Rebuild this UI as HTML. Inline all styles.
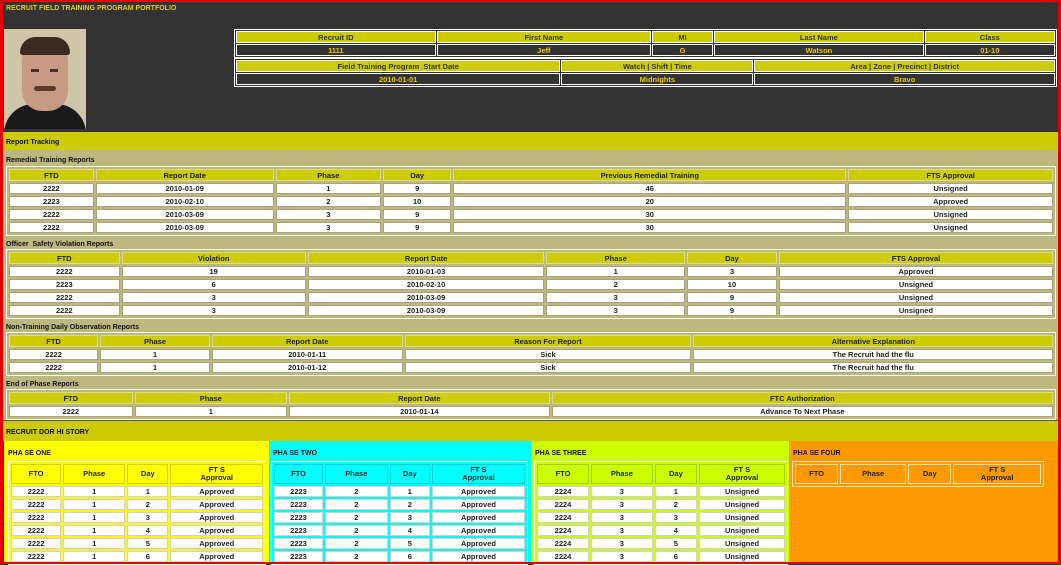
<!DOCTYPE html>
<html><head><meta charset="utf-8"><style>
*{margin:0;padding:0;box-sizing:border-box}
body{width:1061px;height:564px;overflow:hidden;background:#333;font-family:"Liberation Sans",Arial,sans-serif;font-size:7.5px;font-weight:bold;position:relative}
.frame{position:absolute;inset:0;border:3px solid #e00000;border-bottom-width:2px;border-top-width:2px;pointer-events:none;z-index:10}
.abs{position:absolute}
table{border-collapse:separate;border-spacing:2px;table-layout:fixed;position:absolute}
td{text-align:center;white-space:nowrap;overflow:hidden;padding:0}
.info{border:1px solid #fff;border-spacing:1px;background:#333}
.info td{border:1px solid #fff}
.info .h{background:#cccc00;color:#333;height:12px}
.info .v{background:#333;color:#e8c800;height:12px}
.rt{border:1px solid #fff;background:#bdb87f}
.rt td{border:1px solid #a9a47a;color:#222}
.rt .h td{background:#cccc00;border-color:#e0dc80;height:12px}
.rt .d td{background:#fff;height:11px}
.lbl{position:absolute;left:6px;color:#111;font-size:7px}
.ph{position:absolute;top:441px;height:123px}
.ph .t{position:absolute;left:4px;top:9px;color:#111;font-size:7px}
.pt{border:1px solid #fff;border-spacing:2px}
.pt td{border:1px solid rgba(0,0,0,.18);color:#222}
.pt .h td{height:20px;line-height:8px}
.pt .d td{background:#fff;height:11px}
</style></head><body>
<div class="frame"></div>
<div class="abs" style="left:6px;top:5px;color:#e8c800;font-size:7px">RECRUIT FIELD TRAINING PROGRAM PORTFOLIO</div>
<div class="abs" style="left:4px;top:29px;width:82px;height:100px;background:#cfc5a8;overflow:hidden">
 <div class="abs" style="left:0;top:75px;width:82px;height:30px;background:#1a1a1a;border-radius:30px 30px 0 0"></div>
 <div class="abs" style="left:18px;top:10px;width:46px;height:72px;background:#c79a82;border-radius:22px 22px 20px 20px"></div>
 <div class="abs" style="left:16px;top:8px;width:50px;height:18px;background:#3a2a22;border-radius:25px 25px 4px 4px"></div>
 <div class="abs" style="left:27px;top:40px;width:8px;height:3px;background:#4a3028"></div>
 <div class="abs" style="left:46px;top:40px;width:8px;height:3px;background:#4a3028"></div>
 <div class="abs" style="left:30px;top:57px;width:22px;height:5px;background:#5a3a2a;border-radius:3px"></div>
</div>

<table class="info" style="left:234px;top:29px;width:823px">
<colgroup><col style="width:24.5%"><col style="width:26.3%"><col style="width:7.5%"><col style="width:25.7%"><col style="width:16%"></colgroup>
<tr><td class="h">Recruit ID</td><td class="h">First Name</td><td class="h">MI</td><td class="h">Last Name</td><td class="h">Class</td></tr>
<tr><td class="v">1111</td><td class="v">Jeff</td><td class="v">G</td><td class="v">Watson</td><td class="v">01-10</td></tr>
</table>
<table class="info" style="left:234px;top:58px;width:823px">
<colgroup><col style="width:39.7%"><col style="width:23.5%"><col style="width:36.8%"></colgroup>
<tr><td class="h">Field Training Program&nbsp; Start Date</td><td class="h">Watch | Shift | Time</td><td class="h">Area | Zone | Precinct | District</td></tr>
<tr><td class="v">2010-01-01</td><td class="v">Midnights</td><td class="v">Bravo</td></tr>
</table>

<div class="abs" style="left:0;top:132px;width:1061px;height:18px;background:#cccc00"></div>
<div class="abs" style="left:6px;top:139px;color:#111;font-size:7px">Report Tracking</div>
<div class="abs" style="left:0;top:150px;width:1061px;height:270px;background:#bdb87f"></div>

<div class="lbl" style="top:157px">Remedial Training Reports</div>
<table class="rt" style="left:6px;top:166px;width:1050px">
<colgroup><col style="width:8.2%"><col style="width:17.2%"><col style="width:10.2%"><col style="width:6.6%"><col style="width:38%"><col style="width:19.8%"></colgroup>
<tr class="h"><td>FTD</td><td>Report Date</td><td>Phase</td><td>Day</td><td>Previous Remedial Training</td><td>FTS Approval</td></tr>
<tr class="d"><td>2222</td><td>2010-01-09</td><td>1</td><td>9</td><td>46</td><td>Unsigned</td></tr>
<tr class="d"><td>2223</td><td>2010-02-10</td><td>2</td><td>10</td><td>20</td><td>Approved</td></tr>
<tr class="d"><td>2222</td><td>2010-03-09</td><td>3</td><td>9</td><td>30</td><td>Unsigned</td></tr>
<tr class="d"><td>2222</td><td>2010-03-09</td><td>3</td><td>9</td><td>30</td><td>Unsigned</td></tr>
</table>

<div class="lbl" style="top:241px">Officer&nbsp; Safety Violation Reports</div>
<table class="rt" style="left:6px;top:249px;width:1050px">
<colgroup><col style="width:10.7%"><col style="width:17.8%"><col style="width:22.9%"><col style="width:13.4%"><col style="width:8.7%"><col style="width:26.5%"></colgroup>
<tr class="h"><td>FTD</td><td>Violation</td><td>Report Date</td><td>Phase</td><td>Day</td><td>FTS Approval</td></tr>
<tr class="d"><td>2222</td><td>19</td><td>2010-01-03</td><td>1</td><td>3</td><td>Approved</td></tr>
<tr class="d"><td>2223</td><td>6</td><td>2010-02-10</td><td>2</td><td>10</td><td>Unsigned</td></tr>
<tr class="d"><td>2222</td><td>3</td><td>2010-03-09</td><td>3</td><td>9</td><td>Unsigned</td></tr>
<tr class="d"><td>2222</td><td>3</td><td>2010-03-09</td><td>3</td><td>9</td><td>Unsigned</td></tr>
</table>

<div class="lbl" style="top:324px">Non-Training Daily Observation Reports</div>
<table class="rt" style="left:6px;top:332px;width:1050px">
<colgroup><col style="width:8.6%"><col style="width:10.6%"><col style="width:18.4%"><col style="width:27.7%"><col style="width:34.7%"></colgroup>
<tr class="h"><td>FTD</td><td>Phase</td><td>Report Date</td><td>Reason For Report</td><td>Alternative Explanation</td></tr>
<tr class="d"><td>2222</td><td>1</td><td>2010-01-11</td><td>Sick</td><td>The Recruit had the flu</td></tr>
<tr class="d"><td>2222</td><td>1</td><td>2010-01-12</td><td>Sick</td><td>The Recruit had the flu</td></tr>
</table>

<div class="lbl" style="top:381px">End of Phase Reports</div>
<table class="rt" style="left:6px;top:389px;width:1050px">
<colgroup><col style="width:11.9%"><col style="width:14.7%"><col style="width:25.1%"><col style="width:48.3%"></colgroup>
<tr class="h"><td>FTD</td><td>Phase</td><td>Report Date</td><td>FTC Authorization</td></tr>
<tr class="d"><td>2222</td><td>1</td><td>2010-01-14</td><td>Advance To Next Phase</td></tr>
</table>

<div class="abs" style="left:0;top:420px;width:1061px;height:21px;background:#cccc00;border-top:1px solid #555"></div>
<div class="abs" style="left:6px;top:429px;color:#111;font-size:7px">RECRUIT DOR HI STORY</div>

<div class="ph" style="left:4px;width:265px;background:#ffff00"><div class="t">PHA SE ONE</div>
<table class="pt" style="left:4px;top:20px;width:258px">
<colgroup><col style="width:20.4%"><col style="width:25.2%"><col style="width:16.8%"><col style="width:37.6%"></colgroup>
<tr class="h"><td>FTO</td><td>Phase</td><td>Day</td><td>FT S<br>Approval</td></tr>
<tr class="d"><td>2222</td><td>1</td><td>1</td><td>Approved</td></tr>
<tr class="d"><td>2222</td><td>1</td><td>2</td><td>Approved</td></tr>
<tr class="d"><td>2222</td><td>1</td><td>3</td><td>Approved</td></tr>
<tr class="d"><td>2222</td><td>1</td><td>4</td><td>Approved</td></tr>
<tr class="d"><td>2222</td><td>1</td><td>5</td><td>Approved</td></tr>
<tr class="d"><td>2222</td><td>1</td><td>6</td><td>Approved</td></tr>
</table></div>

<div class="ph" style="left:269px;width:262px;background:#00ffff"><div class="t">PHA SE TWO</div>
<table class="pt" style="left:2px;top:20px;width:257px">
<colgroup><col style="width:20%"><col style="width:25.6%"><col style="width:16.4%"><col style="width:38%"></colgroup>
<tr class="h"><td>FTO</td><td>Phase</td><td>Day</td><td>FT S<br>Approval</td></tr>
<tr class="d"><td>2223</td><td>2</td><td>1</td><td>Approved</td></tr>
<tr class="d"><td>2223</td><td>2</td><td>2</td><td>Approved</td></tr>
<tr class="d"><td>2223</td><td>2</td><td>3</td><td>Approved</td></tr>
<tr class="d"><td>2223</td><td>2</td><td>4</td><td>Approved</td></tr>
<tr class="d"><td>2223</td><td>2</td><td>5</td><td>Approved</td></tr>
<tr class="d"><td>2223</td><td>2</td><td>6</td><td>Approved</td></tr>
</table></div>

<div class="ph" style="left:531px;width:258px;background:#ccff00"><div class="t">PHA SE THREE</div>
<table class="pt" style="left:3px;top:20px;width:254px">
<colgroup><col style="width:21.5%"><col style="width:25.5%"><col style="width:17.5%"><col style="width:35.5%"></colgroup>
<tr class="h"><td>FTO</td><td>Phase</td><td>Day</td><td>FT S<br>Approval</td></tr>
<tr class="d"><td>2224</td><td>3</td><td>1</td><td>Unsigned</td></tr>
<tr class="d"><td>2224</td><td>3</td><td>2</td><td>Unsigned</td></tr>
<tr class="d"><td>2224</td><td>3</td><td>3</td><td>Unsigned</td></tr>
<tr class="d"><td>2224</td><td>3</td><td>4</td><td>Unsigned</td></tr>
<tr class="d"><td>2224</td><td>3</td><td>5</td><td>Unsigned</td></tr>
<tr class="d"><td>2224</td><td>3</td><td>6</td><td>Unsigned</td></tr>
</table></div>

<div class="ph" style="left:789px;width:269px;background:#ff9900"><div class="t">PHA SE FOUR</div>
<table class="pt" style="left:3px;top:20px;width:252px;border-color:#ffe0a0">
<colgroup><col style="width:18%"><col style="width:27.5%"><col style="width:18%"><col style="width:36.5%"></colgroup>
<tr class="h"><td style="border-color:#ffe0a0">FTO</td><td style="border-color:#ffe0a0">Phase</td><td style="border-color:#ffe0a0">Day</td><td style="border-color:#ffe0a0">FT S<br>Approval</td></tr>
</table></div>
</body></html>
